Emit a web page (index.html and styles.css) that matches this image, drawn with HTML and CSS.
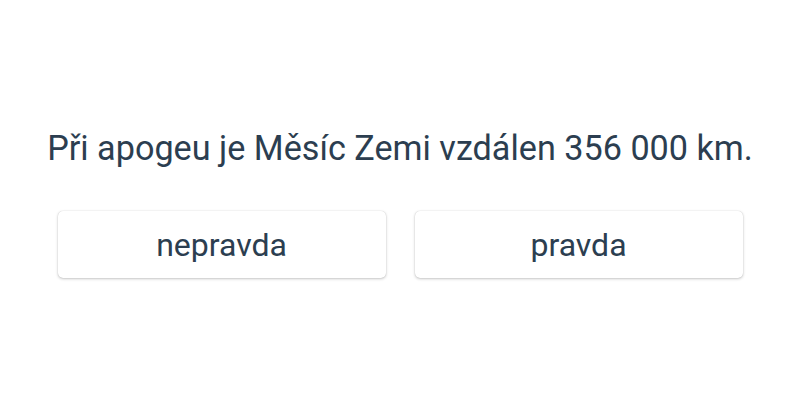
FILE: index.html
```html
<!DOCTYPE html>
<html lang="cs">
<head>
<meta charset="utf-8">
<link rel="stylesheet" href="styles.css">
</head>
<body>
<main class="quiz">
  <p class="question">Při apogeu je Měsíc Zemi vzdálen 356 000 km.</p>
  <div class="answers">
    <button class="answer">nepravda</button>
    <button class="answer">pravda</button>
  </div>
</main>
</body>
</html>
```
FILE: styles.css
```css
html, body {
  margin: 0;
  background: #fff;
}
.quiz {
  width: 800px;
  height: 400px;
  display: flex;
  flex-direction: column;
  align-items: center;
  padding-top: 128px;
  box-sizing: border-box;
  font-family: Roboto, "Liberation Sans", sans-serif;
  color: #2c3e50;
}
.question {
  margin: 0;
  font-size: 34.2px;
  line-height: 40px;
}
.answers {
  margin-top: 43px;
  display: flex;
  gap: 29px;
}
.answer {
  width: 328px;
  height: 67px;
  border: none;
  border-radius: 5px;
  background: #fff;
  box-shadow: 0 0 1px rgba(0, 0, 0, 0.2), 0 1px 3px rgba(0, 0, 0, 0.22);
  font-family: inherit;
  font-size: 32px;
  color: #2c3e50;
  padding: 0;
}
```
